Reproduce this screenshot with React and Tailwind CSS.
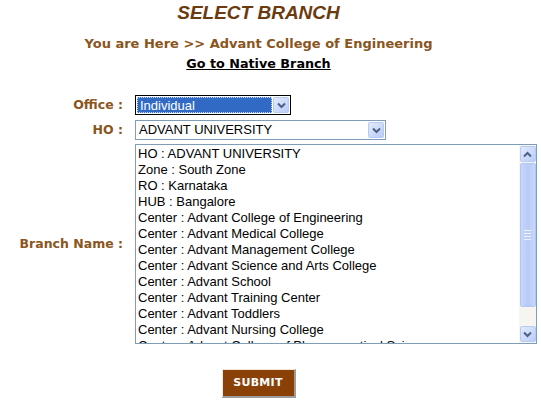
import React from "react";

const items = [
  "HO : ADVANT UNIVERSITY",
  "Zone : South Zone",
  "RO : Karnataka",
  "HUB : Bangalore",
  "Center : Advant College of Engineering",
  "Center : Advant Medical College",
  "Center : Advant Management College",
  "Center : Advant Science and Arts College",
  "Center : Advant School",
  "Center : Advant Training Center",
  "Center : Advant Toddlers",
  "Center : Advant Nursing College",
  "Center : Advant College of Pharmaceutical Sciences",
];

function Chevron({ up = false }) {
  return (
    <svg width="9" height="7" viewBox="0 0 9 7" className={up ? "rotate-180" : ""}>
      <path d="M1 1.5 L4.5 5 L8 1.5" fill="none" stroke="#4d6185" strokeWidth="2" />
    </svg>
  );
}

function ArrowBtn({ up = false, h = "h-[17px]" }) {
  return (
    <div className={`w-[16px] ${h} flex items-center justify-center rounded-[2px] border border-[#b7caf5] bg-[linear-gradient(135deg,#e2eafe,#b9cdf8)]`}>
      <Chevron up={up} />
    </div>
  );
}

export default function App() {
  const verdana = { fontFamily: '"DejaVu Sans", Verdana, sans-serif' };
  const arial = { fontFamily: '"Liberation Sans", Arial, sans-serif' };
  return (
    <div className="w-[541px] h-[403px] bg-white overflow-hidden">
      <div className="w-[517px] flex flex-col items-center">
        <div
          className="mt-[2px] text-[19px] font-bold italic text-[#6b3a0e] leading-[22px]"
          style={arial}
        >
          SELECT BRANCH
        </div>
        <div
          className="mt-[12px] text-[13px] font-bold text-[#8b5520] leading-[16px]"
          style={verdana}
        >
          You are Here &gt;&gt; Advant College of Engineering
        </div>
        <div
          className="mt-[4px] text-[12.75px] font-bold text-black underline leading-[16px]"
          style={verdana}
        >
          Go to Native Branch
        </div>
      </div>

      <div className="mt-[23px] grid grid-cols-[123px_auto] gap-x-[12px] items-center">
        <div className="text-right text-[12.5px] font-bold text-[#8b5520]" style={verdana}>
          Office :
        </div>
        <div className="w-[156px] h-[20px] border border-black bg-white flex items-center p-[1px]">
          <div className="flex-1 h-full bg-[#316ac5] text-white text-[13px] leading-[16px] pl-[2px] border border-dotted border-[#c9d8f3]" style={arial}>
            Individual
          </div>
          <div className="ml-[1px]">
            <ArrowBtn h="h-[16px]" />
          </div>
        </div>

        <div className="mt-[5px] text-right text-[12.5px] font-bold text-[#8b5520]" style={verdana}>
          HO :
        </div>
        <div className="mt-[5px] w-[251px] h-[20px] border border-[#7f9db9] bg-white flex items-center p-[1px]">
          <div className="flex-1 text-black text-[13px] leading-[16px] pl-[2px]" style={arial}>
            ADVANT UNIVERSITY
          </div>
          <ArrowBtn h="h-[16px]" />
        </div>

        <div className="mt-[4px] text-right text-[12.5px] font-bold text-[#8b5520]" style={verdana}>
          Branch Name :
        </div>
        <div className="mt-[4px] w-[402px] h-[200px] border border-[#7f9db9] bg-white flex overflow-hidden">
          <div className="flex-1 overflow-hidden pt-[1px] pl-[2px]">
            {items.map((t) => (
              <div key={t} className="h-[16px] text-[13px] leading-[16px] text-black whitespace-nowrap" style={arial}>
                {t}
              </div>
            ))}
          </div>
          <div className="w-[17px] h-full bg-[#f6f5ef] flex flex-col items-center py-[1px]">
            <ArrowBtn up h="h-[16px]" />
            <div className="mt-[1px] w-[16px] h-[144px] rounded-[2px] border border-[#b1c6f2] bg-[linear-gradient(90deg,#c7d6fb,#b8cbf7,#c9d7fb)] flex flex-col items-center justify-center gap-[2px]">
              <div className="w-[7px] h-[1px] bg-[#eef3fe]" />
              <div className="w-[7px] h-[1px] bg-[#eef3fe]" />
              <div className="w-[7px] h-[1px] bg-[#eef3fe]" />
              <div className="w-[7px] h-[1px] bg-[#eef3fe]" />
            </div>
            <div className="flex-1" />
            <ArrowBtn h="h-[16px]" />
          </div>
        </div>
      </div>

      <div className="w-[517px] flex justify-center mt-[25px]">
        <div
          className="w-[74px] h-[29px] bg-[#8a4108] border-r-2 border-b-2 border-[#9d9d9d] border-t border-l border-t-[#f0e6dc] border-l-[#f0e6dc] text-white text-[11px] font-bold flex items-center justify-center tracking-[0.3px]"
          style={verdana}
        >
          SUBMIT
        </div>
      </div>
    </div>
  );
}
